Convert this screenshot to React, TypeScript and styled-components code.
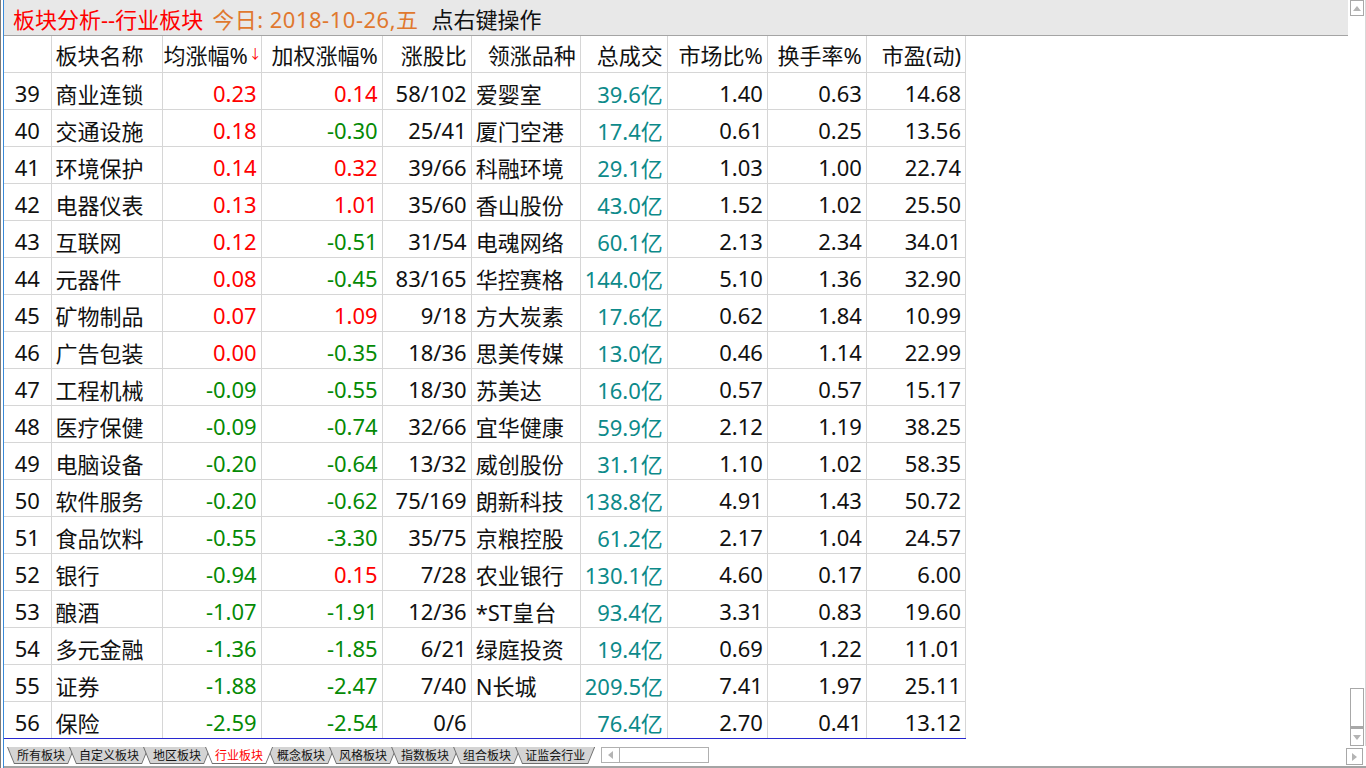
import React from "react";
import styled, {createGlobalStyle} from "styled-components";

type Row = [number, string, string, string, string, string, string, string, string, string];

const rows: Row[] = [
  [39, "商业连锁", "0.23", "0.14", "58/102", "爱婴室", "39.6亿", "1.40", "0.63", "14.68"],
  [40, "交通设施", "0.18", "-0.30", "25/41", "厦门空港", "17.4亿", "0.61", "0.25", "13.56"],
  [41, "环境保护", "0.14", "0.32", "39/66", "科融环境", "29.1亿", "1.03", "1.00", "22.74"],
  [42, "电器仪表", "0.13", "1.01", "35/60", "香山股份", "43.0亿", "1.52", "1.02", "25.50"],
  [43, "互联网", "0.12", "-0.51", "31/54", "电魂网络", "60.1亿", "2.13", "2.34", "34.01"],
  [44, "元器件", "0.08", "-0.45", "83/165", "华控赛格", "144.0亿", "5.10", "1.36", "32.90"],
  [45, "矿物制品", "0.07", "1.09", "9/18", "方大炭素", "17.6亿", "0.62", "1.84", "10.99"],
  [46, "广告包装", "0.00", "-0.35", "18/36", "思美传媒", "13.0亿", "0.46", "1.14", "22.99"],
  [47, "工程机械", "-0.09", "-0.55", "18/30", "苏美达", "16.0亿", "0.57", "0.57", "15.17"],
  [48, "医疗保健", "-0.09", "-0.74", "32/66", "宜华健康", "59.9亿", "2.12", "1.19", "38.25"],
  [49, "电脑设备", "-0.20", "-0.64", "13/32", "威创股份", "31.1亿", "1.10", "1.02", "58.35"],
  [50, "软件服务", "-0.20", "-0.62", "75/169", "朗新科技", "138.8亿", "4.91", "1.43", "50.72"],
  [51, "食品饮料", "-0.55", "-3.30", "35/75", "京粮控股", "61.2亿", "2.17", "1.04", "24.57"],
  [52, "银行", "-0.94", "0.15", "7/28", "农业银行", "130.1亿", "4.60", "0.17", "6.00"],
  [53, "酿酒", "-1.07", "-1.91", "12/36", "*ST皇台", "93.4亿", "3.31", "0.83", "19.60"],
  [54, "多元金融", "-1.36", "-1.85", "6/21", "绿庭投资", "19.4亿", "0.69", "1.22", "11.01"],
  [55, "证券", "-1.88", "-2.47", "7/40", "N长城", "209.5亿", "7.41", "1.97", "25.11"],
  [56, "保险", "-2.59", "-2.54", "0/6", "", "76.4亿", "2.70", "0.41", "13.12"],
];

const colWidths = [47, 111, 99, 121, 89, 109, 87, 100, 99, 99];

const tabs = ["所有板块", "自定义板块", "地区板块", "行业板块", "概念板块", "风格板块", "指数板块", "组合板块", "证监会行业"];

const GlobalStyle = createGlobalStyle`
  html, body {
    margin: 0;
    padding: 0;
    background: #fff;
    overflow: hidden;
  }
  body {
    font-family: "Noto Sans", "Noto Sans CJK SC", sans-serif;
  }
`;

const Frame = styled.div`
  width: 1366px;
  height: 768px;
  display: flex;
  background: #fff;
`;

const Edge = styled.div`
  width: 4px;
  box-sizing: border-box;
  border-left: 1px solid #7a7a7a;
  border-right: 1px solid #3a8ad8;
  background: #fff;
`;

const Body = styled.div`
  flex: 1;
  display: flex;
  flex-direction: column;
  min-width: 0;
`;

const Upper = styled.div`
  height: 746px;
  display: flex;
`;

const Main = styled.div`
  flex: 1;
  display: flex;
  flex-direction: column;
  min-width: 0;
`;

const TitleBar = styled.div`
  height: 35px;
  border-bottom: 1px solid #a4a4a4;
  background: #e8e8e8;
  display: flex;
  align-items: center;
  padding-left: 9px;
  font-family: "Noto Sans", "Noto Sans CJK SC", sans-serif;
  font-size: 22px;
  white-space: nowrap;
`;

const TitlePart = styled.span<{ $tone: "red" | "orange" | "black" }>`
  color: ${p => (p.$tone === "red" ? "#ff0000" : p.$tone === "orange" ? "#e0782e" : "#111")};
  margin-right: ${p => (p.$tone === "black" ? "0" : p.$tone === "orange" ? "13px" : "9px")};
  letter-spacing: ${p => (p.$tone === "orange" ? "0.5px" : "0")};
`;

const Grid = styled.table`
  border-collapse: collapse;
  table-layout: fixed;
  width: 962px;
  font-family: "Noto Sans", "Noto Sans CJK SC", sans-serif;
  font-size: 22px;
  color: #111;

  tbody tr:last-child td {
    border-bottom: 1px solid #2828d0;
  }
`;

const HeadCell = styled.th<{ $align?: "left" | "right" | "center"; $tight?: boolean }>`
  height: 36px;
  padding: ${p => (p.$tight ? "0 0 0 1px" : "0 4px")};
  font-weight: normal;
  text-align: ${p => p.$align || "right"};
  border-right: 1px solid #d6d6d6;
  border-bottom: 1px solid #d6d6d6;
  white-space: nowrap;
  overflow: hidden;
`;

const SortArrow = styled.span`
  color: #ff0000;
  font-size: 13px;
  vertical-align: 6px;
  margin-left: 1px;
`;

const Cell = styled.td<{ $align?: "left" | "right" | "center"; $tone?: "up" | "down" | "vol" }>`
  height: 33px;
  padding: 3px ${p => (p.$align === "left" ? "2px 0 4px" : "4px 0 4px")};
  text-align: ${p => p.$align || "right"};
  color: ${p => (p.$tone === "up" ? "#ff0000" : p.$tone === "down" ? "#058a05" : p.$tone === "vol" ? "#0d8a8a" : "#111")};
  border-right: 1px solid #d6d6d6;
  border-bottom: 1px solid #d6d6d6;
  white-space: nowrap;
  overflow: hidden;
`;

const VScroll = styled.div`
  width: 18px;
  box-sizing: border-box;
  padding-left: 2px;
  border-right: 1px solid #d8d8d8;
  display: flex;
  flex-direction: column;
`;

const ScrollBtn = styled.div<{ $h: number }>`
  width: 14px;
  height: ${p => p.$h}px;
  box-sizing: border-box;
  border: 1px solid #a8a8a8;
  background: #fff;
  display: flex;
  align-items: center;
  justify-content: center;
`;

const Track = styled.div`
  flex: 1;
`;

const Thumb = styled.div`
  width: 14px;
  height: 40px;
  box-sizing: border-box;
  border: 1px solid #a8a8a8;
  border-bottom-width: 2px;
  background: #fff;
`;

const TabStrip = styled.div`
  height: 20px;
  display: flex;
  align-items: flex-start;
  padding-top: 1px;
  box-sizing: border-box;
  padding-left: 3px;
`;

const TabOuter = styled.div<{ $active?: boolean }>`
  position: relative;
  z-index: ${p => (p.$active ? 2 : 1)};
  height: 17px;
  margin-right: -6px;
  background: #6e6e6e;
  clip-path: polygon(0 0, 100% 0, calc(100% - 7px) 100%, 7px 100%);
  padding: 0 1px 1px 1px;
  box-sizing: border-box;
  display: flex;
`;

const TabInner = styled.div<{ $active?: boolean }>`
  background: ${p => (p.$active ? "#fff" : "#d4d4d4")};
  clip-path: polygon(0 0, 100% 0, calc(100% - 6.5px) 100%, 6.5px 100%);
  color: ${p => (p.$active ? "#ff0000" : "#111")};
  font-family: "Noto Sans CJK SC", sans-serif;
  font-size: 12px;
  line-height: 16px;
  padding: 0 9px;
  white-space: nowrap;
`;

const HScroll = styled.div`
  margin-left: 12px;
  width: 108px;
  height: 16px;
  box-sizing: border-box;
  border: 1px solid #b0b0b0;
  display: flex;
`;

const HScrollBtn = styled.div`
  width: 17px;
  border-right: 1px solid #b0b0b0;
  display: flex;
  align-items: center;
  justify-content: center;
`;

const Spacer = styled.div`
  flex: 1;
`;

const CornerBtn = styled.div`
  width: 17px;
  height: 17px;
  margin-top: 1px;
  margin-right: 3px;
  box-sizing: border-box;
  border: 1px solid #a8a8a8;
  display: flex;
  align-items: center;
  justify-content: center;
`;

const BottomLine = styled.div`
  height: 2px;
  background: #a4a4a4;
`;

const Tri = ({dir}: { dir: "up" | "down" | "left" | "right" }) => {
  const pts = {
    up: "0,5 8,5 4,0",
    down: "0,0 8,0 4,5",
    left: "5,0 5,8 0,4",
    right: "0,0 0,8 5,4",
  }[dir];
  const vertical = dir === "up" || dir === "down";
  return (
    <svg width={vertical ? 8 : 5} height={vertical ? 5 : 8} viewBox={vertical ? "0 0 8 5" : "0 0 5 8"}>
      <polygon points={pts} fill="#b4b4b4"/>
    </svg>
  );
};

const tone = (v: string) => (v.startsWith("-") ? "down" : "up") as "up" | "down";

const App = () => {
  return (
    <Frame>
      <GlobalStyle/>
      <Edge/>
      <Body>
        <Upper>
          <Main>
            <TitleBar>
              <TitlePart $tone="red">板块分析--行业板块</TitlePart>
              <TitlePart $tone="orange">今日: 2018-10-26,五</TitlePart>
              <TitlePart $tone="black">点右键操作</TitlePart>
            </TitleBar>
            <Grid>
              <colgroup>
                {colWidths.map((w, i) => <col key={i} style={{width: w}}/>)}
              </colgroup>
              <thead>
                <tr>
                  <HeadCell $align="center"></HeadCell>
                  <HeadCell $align="left">板块名称</HeadCell>
                  <HeadCell $align="left" $tight>均涨幅%<SortArrow>↓</SortArrow></HeadCell>
                  <HeadCell>加权涨幅%</HeadCell>
                  <HeadCell>涨股比</HeadCell>
                  <HeadCell>领涨品种</HeadCell>
                  <HeadCell>总成交</HeadCell>
                  <HeadCell>市场比%</HeadCell>
                  <HeadCell>换手率%</HeadCell>
                  <HeadCell>市盈(动)</HeadCell>
                </tr>
              </thead>
              <tbody>
                {rows.map(r => (
                  <tr key={r[0]}>
                    <Cell $align="center">{r[0]}</Cell>
                    <Cell $align="left">{r[1]}</Cell>
                    <Cell $tone={tone(r[2])}>{r[2]}</Cell>
                    <Cell $tone={tone(r[3])}>{r[3]}</Cell>
                    <Cell>{r[4]}</Cell>
                    <Cell $align="left">{r[5]}</Cell>
                    <Cell $tone="vol">{r[6]}</Cell>
                    <Cell>{r[7]}</Cell>
                    <Cell>{r[8]}</Cell>
                    <Cell>{r[9]}</Cell>
                  </tr>
                ))}
              </tbody>
            </Grid>
          </Main>
          <VScroll>
            <ScrollBtn $h={16}><Tri dir="up"/></ScrollBtn>
            <Track/>
            <Thumb/>
            <ScrollBtn $h={18}><Tri dir="down"/></ScrollBtn>
          </VScroll>
        </Upper>
        <TabStrip>
          {tabs.map(t => (
            <TabOuter key={t} $active={t === "行业板块"}>
              <TabInner $active={t === "行业板块"}>{t}</TabInner>
            </TabOuter>
          ))}
          <HScroll>
            <HScrollBtn><Tri dir="left"/></HScrollBtn>
          </HScroll>
          <Spacer/>
          <CornerBtn><Tri dir="right"/></CornerBtn>
        </TabStrip>
        <BottomLine/>
      </Body>
    </Frame>
  );
};

export default App;
